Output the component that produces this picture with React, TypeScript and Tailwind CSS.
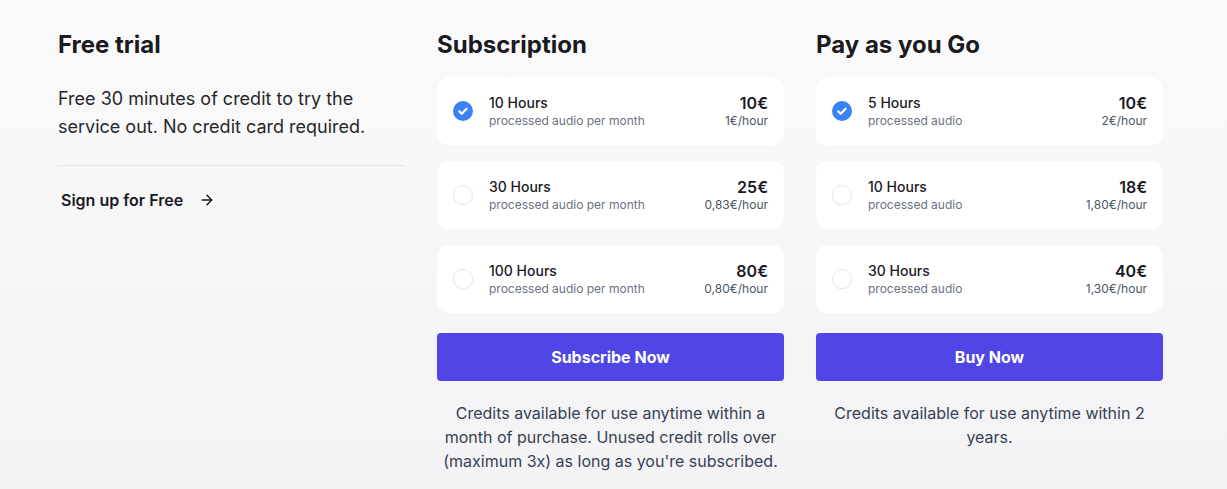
import React from "react";
import { ArrowRight } from "lucide-react";

type Plan = { title: string; sub: string; price: string; rate: string; checked?: boolean };

const subscription: Plan[] = [
  { title: "10 Hours", sub: "processed audio per month", price: "10€", rate: "1€/hour", checked: true },
  { title: "30 Hours", sub: "processed audio per month", price: "25€", rate: "0,83€/hour" },
  { title: "100 Hours", sub: "processed audio per month", price: "80€", rate: "0,80€/hour" },
];

const payg: Plan[] = [
  { title: "5 Hours", sub: "processed audio", price: "10€", rate: "2€/hour", checked: true },
  { title: "10 Hours", sub: "processed audio", price: "18€", rate: "1,80€/hour" },
  { title: "30 Hours", sub: "processed audio", price: "40€", rate: "1,30€/hour" },
];

function Radio({ checked }: { checked?: boolean }) {
  if (checked) {
    return (
      <svg width="20" height="20" viewBox="0 0 20 20" className="shrink-0">
        <circle cx="10" cy="10" r="10" fill="#3b82f6" />
        <path d="M6.3 10.4l2.4 2.4 4.9-5.1" fill="none" stroke="#fff" strokeWidth="2.2" strokeLinecap="round" strokeLinejoin="round" />
      </svg>
    );
  }
  return <div className="w-5 h-5 shrink-0 rounded-full border border-[#e5e7eb] bg-white shadow-[0_1px_1px_rgba(0,0,0,0.04)]" />;
}

function PlanCard({ p }: { p: Plan }) {
  return (
    <div className="flex items-center bg-white rounded-xl px-4 py-4 h-[68px]">
      <Radio checked={p.checked} />
      <div className="ml-4 flex-1 flex flex-col">
        <span className="text-[14px] leading-5 font-medium text-[#1a1a1f]">{p.title}</span>
        <span className="text-[12px] leading-4 text-[#6b7280]">{p.sub}</span>
      </div>
      <div className="flex flex-col items-end">
        <span className="text-[16px] leading-5 font-semibold text-[#1a1a1f]">{p.price}</span>
        <span className="text-[12px] leading-4 text-[#4b5563]">{p.rate}</span>
      </div>
    </div>
  );
}

function PlanColumn({ title, plans, button, note }: { title: string; plans: Plan[]; button: string; note: React.ReactNode }) {
  return (
    <div className="flex flex-col">
      <h2 className="text-[24px] leading-8 font-bold text-[#1a1a1f]">{title}</h2>
      <div className="mt-4 flex flex-col gap-4">
        {plans.map((p) => (
          <PlanCard key={p.title} p={p} />
        ))}
      </div>
      <button className="mt-5 h-12 rounded bg-[#4f46e5] text-white text-[16px] font-bold">{button}</button>
      <p className="mt-5 text-center text-[16px] leading-6 text-[#374151]">{note}</p>
    </div>
  );
}

export default function App() {
  return (
    <div
      className="w-full h-[489px] overflow-hidden bg-linear-to-b from-[#fafafa] to-[#f3f3f6]"
      style={{ fontFamily: "Inter, 'Noto Sans', sans-serif" }}
    >
      <div className="pl-[58px] pt-[29px] grid grid-cols-[347px_347px_347px] gap-x-8">
        <div className="flex flex-col">
          <h2 className="text-[24px] leading-8 font-bold text-[#1a1a1f]">Free trial</h2>
          <p className="mt-6 text-[18px] leading-7 text-[#27272a] pb-6 border-b border-[#e4e4e7]">
            Free 30 minutes of credit to try the service out. No credit card required.
          </p>
          <a className="mt-[22px] ml-[3px] flex items-center gap-4 text-[16px] leading-6 font-semibold text-[#1a1a1f]">
            Sign up for Free
            <ArrowRight className="w-4 h-4" strokeWidth={2.25} />
          </a>
        </div>
        <PlanColumn
          title="Subscription"
          plans={subscription}
          button="Subscribe Now"
          note="Credits available for use anytime within a month of purchase. Unused credit rolls over (maximum 3x) as long as you're subscribed."
        />
        <PlanColumn
          title="Pay as you Go"
          plans={payg}
          button="Buy Now"
          note="Credits available for use anytime within 2 years."
        />
      </div>
    </div>
  );
}
